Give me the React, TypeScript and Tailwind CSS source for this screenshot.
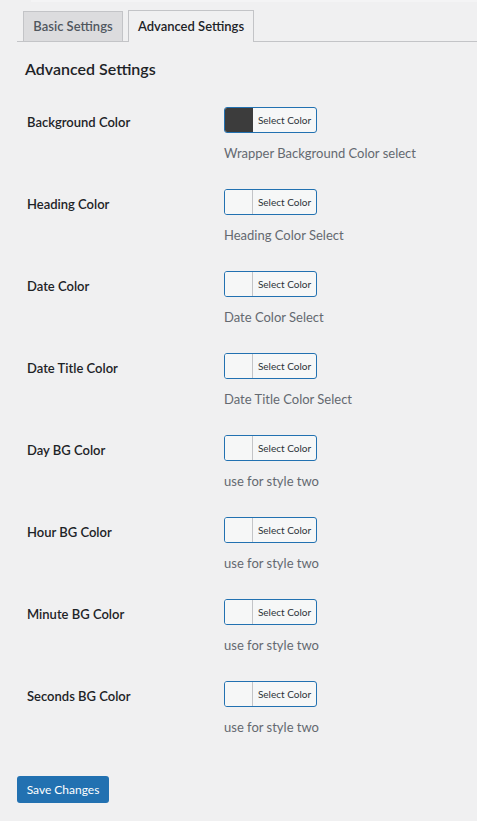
import React from "react";

type Row = { label: string; desc: string; color?: string };

const rows: Row[] = [
  { label: "Background Color", desc: "Wrapper Background Color select", color: "#3c3c3c" },
  { label: "Heading Color", desc: "Heading Color Select" },
  { label: "Date Color", desc: "Date Color Select" },
  { label: "Date Title Color", desc: "Date Title Color Select" },
  { label: "Day BG Color", desc: "use for style two" },
  { label: "Hour BG Color", desc: "use for style two" },
  { label: "Minute BG Color", desc: "use for style two" },
  { label: "Seconds BG Color", desc: "use for style two" },
];

function ColorButton({ color }: { color?: string }) {
  return (
    <div className="flex h-[26px] w-[93px] overflow-hidden rounded-[3px] border border-[#2271b1] bg-[#f6f7f7]">
      <div
        className={
          color
            ? "h-full w-[28px] bg-[#3c3c3c]"
            : "h-full w-[28px] border-r border-[#c3c4c7] bg-[#f6f7f7]"
        }
      />
      <div className="flex flex-1 items-center justify-center text-[10px] leading-none text-[#2c3338]">
        Select Color
      </div>
    </div>
  );
}

export default function App() {
  return (
    <div
      className="min-h-[821px] w-[477px] bg-[#f0f0f1] text-[#1d2327]"
      style={{ fontFamily: "Lato, 'Open Sans', sans-serif" }}
    >
      <div className="ml-[31px] h-[2px] bg-[#f4f4f5]" />
      <div className="ml-[17px] mt-[8px] flex h-[32px] items-end gap-[5px] border-b border-[#c3c4c7] pl-[6px]">
        <div className="-mb-px flex h-[31px] w-[100px] items-center justify-center border border-[#c3c4c7] bg-[#dcdcde] text-[13px] font-semibold text-[#50575e]">
          Basic Settings
        </div>
        <div className="-mb-px flex h-[32px] w-[126px] items-center justify-center border border-b-0 border-[#c3c4c7] bg-[#f0f0f1] text-[13px] font-semibold text-[#1d2327]">
          Advanced Settings
        </div>
      </div>
      <h2 className="ml-[25px] mt-[16px] text-[16px] font-semibold leading-[22px] text-[#1d2327]">
        Advanced Settings
      </h2>
      <div className="mt-[12px] flex flex-col">
        {rows.map((r) => (
          <div key={r.label} className="flex h-[82px]">
            <div className="w-[224px] shrink-0 pl-[27px] pt-[20px] text-[13px] font-semibold leading-[20px]">
              {r.label}
            </div>
            <div className="flex flex-col pt-[15px]">
              <ColorButton color={r.color} />
              <div className="mt-[10px] text-[13px] leading-[20px] text-[#646970]">{r.desc}</div>
            </div>
          </div>
        ))}
      </div>
      <div className="ml-[17px] mt-[28px] pb-[17px]">
        <button className="flex h-[27px] w-[92px] items-center justify-center rounded-[3px] bg-[#2271b1] text-[12px] text-white">
          Save Changes
        </button>
      </div>
    </div>
  );
}
